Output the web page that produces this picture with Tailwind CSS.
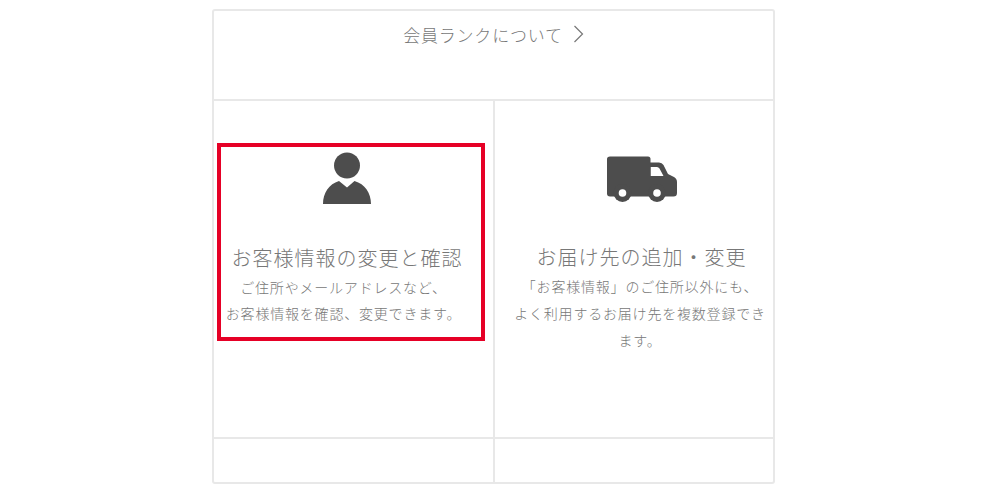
<!DOCTYPE html>
<html lang="ja">
<head>
  <meta charset="UTF-8" />
  <title>会員メニュー</title>
  <script src="https://cdn.jsdelivr.net/npm/@tailwindcss/browser@4"></script>
</head>
<body class="bg-white font-['Noto_Sans_CJK_JP','Noto_Sans',sans-serif] font-light text-[#777]">
  <div class="h-[500px] pt-[9px]">
    <div class="relative ml-[212px] w-[563px] h-[475px] border-2 border-[#e8e8e8] rounded-[3px]">

      <!-- Rank link -->
      <a href="#" class="flex justify-center gap-[10px] h-[90px] pt-[11px] border-b-2 border-[#e8e8e8]">
        <span class="text-[17px] leading-[26px] tracking-[0.8px]">会員ランクについて</span>
        <svg class="w-[11px] h-[18px] mt-[3px]" viewBox="0 0 11 18" fill="none" stroke="#777" stroke-width="1.2"><path d="M1.500 1l8 8-8 8" /></svg>
      </a>

      <!-- Menu cards -->
      <div class="grid grid-cols-[281px_1fr] h-[338px] border-b-2 border-[#e8e8e8]">
        <a href="#" class="flex flex-col items-center border-r-2 border-[#e8e8e8] pt-[51px] pr-[13px] text-center whitespace-nowrap">
          <svg class="w-[48px] h-[52px]" viewBox="0 0 48 52" fill="#4d4d4d">
            <circle cx="24" cy="13.500" r="13" />
            <path d="M0 52C0 41 6 32 16 29L24 35.500L31.500 29C42 32 48 41 48 52Z" />
          </svg>
          <h2 class="mt-[39px] text-[20px] leading-[30px] tracking-[1px]">お客様情報の変更と確認</h2>
          <p class="mt-[1px] mr-[7px] text-[14px] leading-[26px] tracking-[0.8px]">ご住所やメールアドレスなど、<br />お客様情報を確認、変更できます。</p>
        </a>
        <a href="#" class="flex flex-col items-center pt-[55px] pl-[15px] text-center whitespace-nowrap">
          <svg class="w-[70px] h-[46px]" viewBox="0 0 70 46" fill="#4d4d4d">
            <path d="M3 0.500H41Q43.500 0.500 43.500 3V40.500H3Q0 40.500 0 37.500V3Q0 0.500 3 0.500Z" />
            <path fill-rule="evenodd" d="M43 6.500H52Q55 6.500 56.500 9L61 18L66 20.500Q70 22 70 26V37Q70 40.500 66.500 40.500H43ZM43.500 11V20H56.500L52.500 12.500Q51.500 11 50 11Z" />
            <circle cx="15.500" cy="37" r="9" />
            <circle cx="15.500" cy="37" r="3.800" fill="#fff" />
            <circle cx="50" cy="37" r="9" />
            <circle cx="50" cy="37" r="3.800" fill="#fff" />
          </svg>
          <h2 class="mt-[40px] text-[20px] leading-[30px] tracking-[1px]">お届け先の追加・変更</h2>
          <p class="mt-[1px] mr-[3px] text-[14px] leading-[27px] tracking-[0.8px]">「お客様情報」のご住所以外にも、<br />よく利用するお届け先を複数登録でき<br />ます。</p>
        </a>
      </div>

      <!-- Empty bottom row -->
      <div class="grid grid-cols-[281px_1fr] h-[43px]">
        <div class="border-r-2 border-[#e8e8e8]"></div>
        <div></div>
      </div>

      <!-- Red highlight -->
      <div class="absolute left-[3px] top-[132px] w-[268px] h-[198px] border-4 border-[#e60026]"></div>
    </div>
  </div>
</body>
</html>
